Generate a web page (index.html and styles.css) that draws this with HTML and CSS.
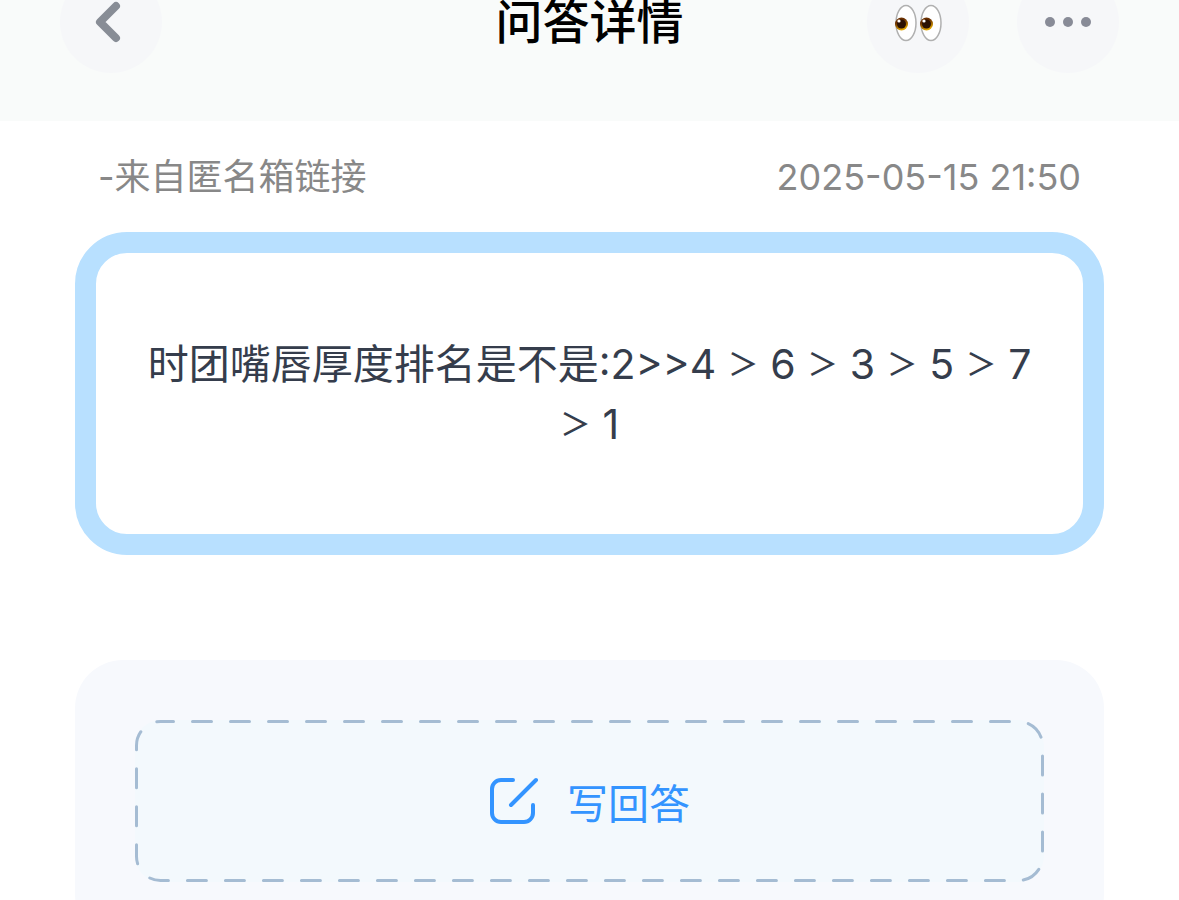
FILE: index.html
```html
<!DOCTYPE html>
<html lang="zh-CN">
<head>
  <meta charset="UTF-8" />
  <meta name="viewport" content="width=device-width, initial-scale=1.0"/>
  <title>问答详情</title>
  <link rel="stylesheet" href="styles.css">
</head>
<body>
  <header class="nav">
    <div class="nav-side">
      <button class="circle" type="button" aria-label="返回">
        <svg class="icon-back" viewBox="0 0 24 40"><path d="M20 4 4 20 20 36"/></svg>
      </button>
    </div>
    <h1>问答详情</h1>
    <div class="nav-side right">
      <button class="circle" type="button" aria-label="围观">
        <svg class="icon-eyes" viewBox="0 0 48 38">
          <defs>
            <linearGradient id="iris" x1="0" y1="0" x2="0.4" y2="1">
              <stop offset="0.4" stop-color="#6b3000"/>
              <stop offset="1" stop-color="#e0a500"/>
            </linearGradient>
          </defs>
          <ellipse class="eye" cx="12" cy="20" rx="10" ry="17.5"/>
          <circle cx="7.5" cy="21" r="6.5" fill="url(#iris)"/>
          <circle cx="7.5" cy="21" r="4.5" fill="#2c1203"/>
          <circle cx="5" cy="18" r="1.6" fill="#fff"/>
          <ellipse class="eye" cx="37" cy="20" rx="10" ry="17.5"/>
          <circle cx="32.5" cy="21" r="6.5" fill="url(#iris)"/>
          <circle cx="32.5" cy="21" r="4.5" fill="#2c1203"/>
          <circle cx="30" cy="18" r="1.6" fill="#fff"/>
        </svg>
      </button>
      <button class="circle" type="button" aria-label="更多">
        <svg class="icon-more" viewBox="0 0 46 10">
          <circle cx="5" cy="5" r="5"/><circle cx="23" cy="5" r="5"/><circle cx="41" cy="5" r="5"/>
        </svg>
      </button>
    </div>
  </header>

  <main>
    <div class="meta">
      <span>-来自匿名箱链接</span>
      <time datetime="2025-05-15T21:50">2025-05-15 21:50</time>
    </div>

    <p class="question">时团嘴唇厚度排名是不是:2&gt;&gt;4 <span class="gt">＞</span> 6 <span class="gt">＞</span> 3 <span class="gt">＞</span> 5 <span class="gt">＞</span> 7 <span class="gt">＞</span> 1</p>

    <section class="answers">
      <button class="write" type="button">
        <svg class="dashes" aria-hidden="true"><rect x="1.5" y="1.5" rx="24" ry="24"/></svg>
        <svg class="icon-edit" viewBox="0 0 48 48">
          <path d="M24 3H12a9 9 0 0 0-9 9v24a9 9 0 0 0 9 9h23a9 9 0 0 0 9-9v-8M22 28 47 3"/>
        </svg>
        <span>写回答</span>
      </button>
    </section>
  </main>
</body>
</html>
```
FILE: styles.css
```css
* {
  box-sizing: border-box;
}

body {
  margin: 0;
  background: #fff;
  font-family: Inter, 'Noto Sans CJK SC', sans-serif;
  overflow: hidden;
}

button {
  border: 0;
  padding: 0;
  font: inherit;
  cursor: pointer;
}

svg {
  fill: none;
  stroke-linecap: round;
  stroke-linejoin: round;
  overflow: visible;
}

.nav {
  margin-top: -29px;
  padding: 0 60px 48px;
  display: flex;
  align-items: center;
  background: #f9fbfa;
}

.nav-side {
  flex: 1;
  display: flex;
  gap: 48px;
}

.nav-side.right {
  justify-content: flex-end;
}

h1 {
  margin: 0;
  font-size: 47px;
  font-weight: 500;
  line-height: 60px;
  color: #000;
}

.circle {
  width: 102px;
  height: 102px;
  border-radius: 50%;
  background: #f6f7f9;
  display: flex;
  align-items: center;
  justify-content: center;
}

.icon-back {
  width: 24px;
  height: 40px;
  margin-right: 6px;
  stroke: #888d96;
  stroke-width: 8px;
}

.icon-eyes {
  width: 48px;
  height: 38px;
}

.eye {
  fill: #fff;
  stroke: #b0b0b0;
  stroke-width: 1.5px;
}

.icon-more {
  width: 46px;
  height: 10px;
  fill: #888b97;
}

main {
  padding: 32px 75px 0;
}

.meta {
  display: flex;
  justify-content: space-between;
  padding: 0 23px;
  font-size: 36px;
  line-height: 48px;
  color: #888;
}

.question {
  margin: 31px 0 105px;
  padding: 81px 46px 80px;
  border: 21px solid #b8e0ff;
  border-radius: 52px;
  font-size: 41px;
  line-height: 60px;
  text-align: center;
  color: #353d4c;
}

.gt {
  font-size: 31px;
  font-weight: 500;
  line-height: 1;
  vertical-align: 4px;
}

.answers {
  padding: 60px;
  border-radius: 48px;
  background: #f7f9fd;
}

.write {
  position: relative;
  width: 100%;
  height: 162px;
  border-radius: 26px;
  background: #f3f9fd;
  display: flex;
  align-items: center;
  justify-content: center;
  gap: 30px;
  font-size: 41px;
  color: #3394ff;
}

.dashes {
  position: absolute;
  inset: 0;
  width: 100%;
  height: 100%;
}

.dashes rect {
  width: calc(100% - 3px);
  height: calc(100% - 3px);
  stroke: #a5bcd3;
  stroke-width: 3px;
  stroke-dasharray: 19 19;
  stroke-dashoffset: 6px;
}

.icon-edit {
  width: 48px;
  height: 48px;
  stroke: #3394ff;
  stroke-width: 4px;
}
```
